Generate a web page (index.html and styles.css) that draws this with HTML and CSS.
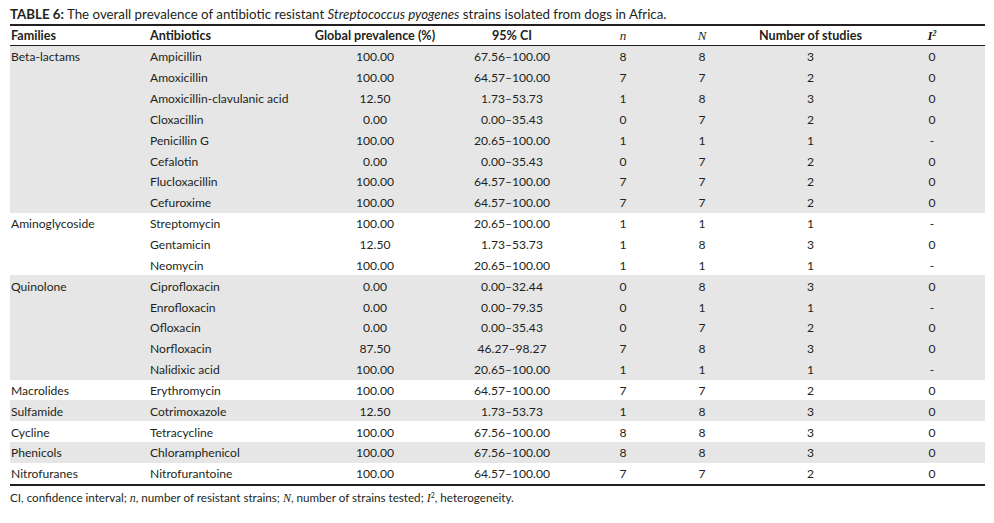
FILE: index.html
```html
<!DOCTYPE html>
<html lang="en">
<head>
<meta charset="utf-8">
<title>Table 6</title>
<link rel="stylesheet" href="styles.css">
</head>
<body>
<div class="page">
  <p class="caption"><b>TABLE 6:</b> The overall prevalence of antibiotic resistant <i>Streptococcus pyogenes</i> strains isolated from dogs in Africa.</p>
  <div class="table">
    <div class="row head">
      <div class="l">Families</div>
      <div class="l">Antibiotics</div>
      <div>Global prevalence (%)</div>
      <div>95% CI</div>
      <div class="math">n</div>
      <div class="math">N</div>
      <div>Number of studies</div>
      <div class="math bold">I<sup>2</sup></div>
    </div>
    <div class="group shade">
      <div class="row"><div class="l">Beta-lactams</div><div class="l">Ampicillin</div><div>100.00</div><div>67.56–100.00</div><div>8</div><div>8</div><div>3</div><div>0</div></div>
      <div class="row"><div class="l"></div><div class="l">Amoxicillin</div><div>100.00</div><div>64.57–100.00</div><div>7</div><div>7</div><div>2</div><div>0</div></div>
      <div class="row"><div class="l"></div><div class="l">Amoxicillin-clavulanic acid</div><div>12.50</div><div>1.73–53.73</div><div>1</div><div>8</div><div>3</div><div>0</div></div>
      <div class="row"><div class="l"></div><div class="l">Cloxacillin</div><div>0.00</div><div>0.00–35.43</div><div>0</div><div>7</div><div>2</div><div>0</div></div>
      <div class="row"><div class="l"></div><div class="l">Penicillin G</div><div>100.00</div><div>20.65–100.00</div><div>1</div><div>1</div><div>1</div><div>-</div></div>
      <div class="row"><div class="l"></div><div class="l">Cefalotin</div><div>0.00</div><div>0.00–35.43</div><div>0</div><div>7</div><div>2</div><div>0</div></div>
      <div class="row"><div class="l"></div><div class="l">Flucloxacillin</div><div>100.00</div><div>64.57–100.00</div><div>7</div><div>7</div><div>2</div><div>0</div></div>
      <div class="row"><div class="l"></div><div class="l">Cefuroxime</div><div>100.00</div><div>64.57–100.00</div><div>7</div><div>7</div><div>2</div><div>0</div></div>
    </div>
    <div class="group">
      <div class="row"><div class="l">Aminoglycoside</div><div class="l">Streptomycin</div><div>100.00</div><div>20.65–100.00</div><div>1</div><div>1</div><div>1</div><div>-</div></div>
      <div class="row"><div class="l"></div><div class="l">Gentamicin</div><div>12.50</div><div>1.73–53.73</div><div>1</div><div>8</div><div>3</div><div>0</div></div>
      <div class="row"><div class="l"></div><div class="l">Neomycin</div><div>100.00</div><div>20.65–100.00</div><div>1</div><div>1</div><div>1</div><div>-</div></div>
    </div>
    <div class="group shade">
      <div class="row"><div class="l">Quinolone</div><div class="l">Ciprofloxacin</div><div>0.00</div><div>0.00–32.44</div><div>0</div><div>8</div><div>3</div><div>0</div></div>
      <div class="row"><div class="l"></div><div class="l">Enrofloxacin</div><div>0.00</div><div>0.00–79.35</div><div>0</div><div>1</div><div>1</div><div>-</div></div>
      <div class="row"><div class="l"></div><div class="l">Ofloxacin</div><div>0.00</div><div>0.00–35.43</div><div>0</div><div>7</div><div>2</div><div>0</div></div>
      <div class="row"><div class="l"></div><div class="l">Norfloxacin</div><div>87.50</div><div>46.27–98.27</div><div>7</div><div>8</div><div>3</div><div>0</div></div>
      <div class="row"><div class="l"></div><div class="l">Nalidixic acid</div><div>100.00</div><div>20.65–100.00</div><div>1</div><div>1</div><div>1</div><div>-</div></div>
    </div>
    <div class="group">
      <div class="row"><div class="l">Macrolides</div><div class="l">Erythromycin</div><div>100.00</div><div>64.57–100.00</div><div>7</div><div>7</div><div>2</div><div>0</div></div>
    </div>
    <div class="group shade">
      <div class="row"><div class="l">Sulfamide</div><div class="l">Cotrimoxazole</div><div>12.50</div><div>1.73–53.73</div><div>1</div><div>8</div><div>3</div><div>0</div></div>
    </div>
    <div class="group">
      <div class="row"><div class="l">Cycline</div><div class="l">Tetracycline</div><div>100.00</div><div>67.56–100.00</div><div>8</div><div>8</div><div>3</div><div>0</div></div>
    </div>
    <div class="group shade">
      <div class="row"><div class="l">Phenicols</div><div class="l">Chloramphenicol</div><div>100.00</div><div>67.56–100.00</div><div>8</div><div>8</div><div>3</div><div>0</div></div>
    </div>
    <div class="group last">
      <div class="row"><div class="l">Nitrofuranes</div><div class="l">Nitrofurantoine</div><div>100.00</div><div>64.57–100.00</div><div>7</div><div>7</div><div>2</div><div>0</div></div>
    </div>
  </div>
  <p class="note">CI, confidence interval; <span class="m">n</span>, number of resistant strains; <span class="m">N</span>, number of strains tested; <span class="m">I</span><sup class="s">2</sup>, heterogeneity.</p>
</div>
</body>
</html>
```

FILE: styles.css
```css
html, body {
  margin: 0;
  padding: 0;
  background: #ffffff;
}

body {
  font-family: Lato, "Open Sans", "Liberation Sans", sans-serif;
  color: #231f20;
}

.page {
  padding: 6px 0 0 10px;
  width: 975px;
}

.caption {
  margin: 0 0 2px 0;
  font-size: 13.3px;
  line-height: 16px;
  white-space: nowrap;
}

.caption b {
  font-weight: 700;
}

.table {
  width: 975px;
  border-top: 2px solid #231f20;
  border-bottom: 2px solid #231f20;
  font-size: 12.1px;
}

.row {
  display: grid;
  grid-template-columns: 139px 161px 130px 144px 78px 80px 137px 106px;
  align-items: center;
  height: 20.85px;
  padding-top: 1px;
  box-sizing: border-box;
}

.row > div {
  text-align: center;
  white-space: nowrap;
}

.row > .l {
  text-align: left;
  padding-left: 1px;
}

.head {
  height: 19px;
  padding-top: 0;
  font-weight: 700;
  font-size: 12.6px;
  border-bottom: 1px solid #231f20;
  box-sizing: content-box;
}

.head .math {
  font-family: "Liberation Serif", "DejaVu Serif", serif;
  font-style: italic;
  font-weight: 400;
  font-size: 13px;
}

.head .math.bold {
  font-weight: 700;
}

.head sup {
  font-size: 8px;
  line-height: 0;
  vertical-align: 4px;
}

.shade {
  background: #e6e6e6;
}

.note {
  margin: 5px 0 0 0;
  font-size: 11.65px;
  line-height: 14px;
  white-space: nowrap;
}

.note .m {
  font-family: "Liberation Serif", "DejaVu Serif", serif;
  font-style: italic;
  font-size: 12px;
}

.note .s {
  font-size: 7px;
  line-height: 0;
  vertical-align: 4px;
}
```
